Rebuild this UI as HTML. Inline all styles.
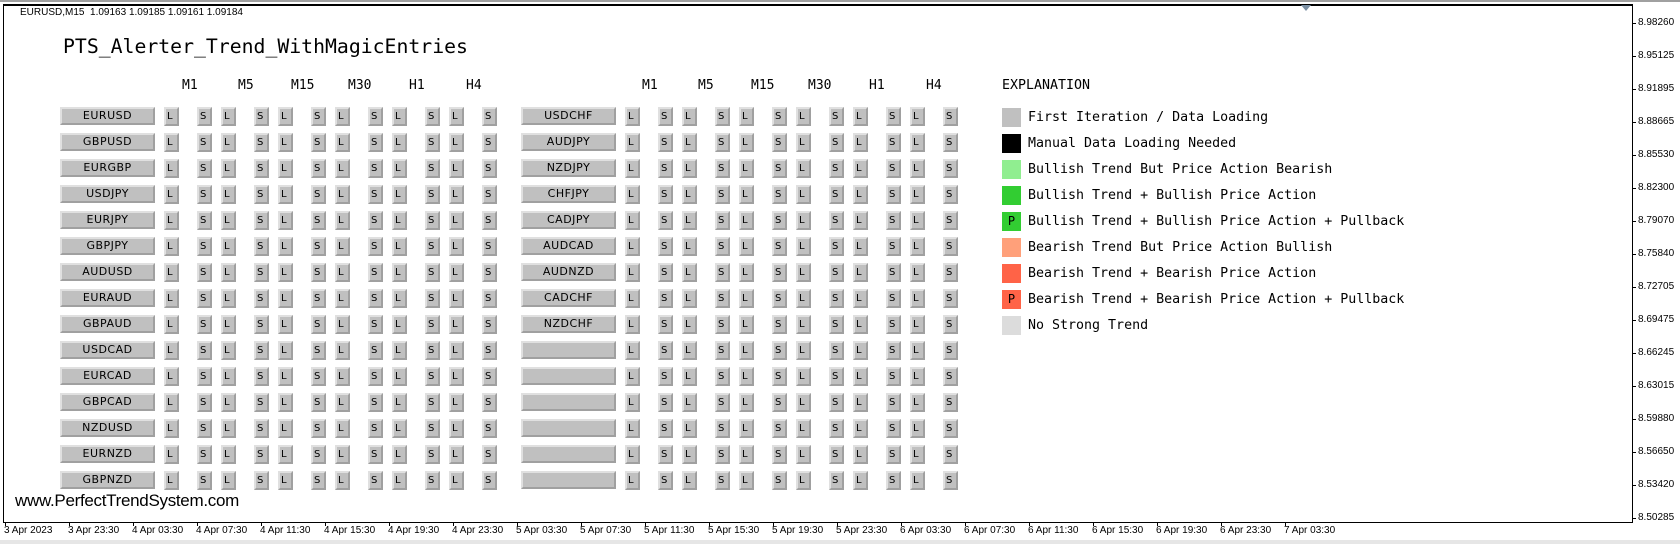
<!DOCTYPE html>
<html><head><meta charset="utf-8"><style>
*{margin:0;padding:0;box-sizing:border-box}
body{width:1680px;height:544px;background:#fff;position:relative;overflow:hidden;font-family:"Liberation Sans",sans-serif}
.topband{position:absolute;left:0;top:0;width:1680px;height:2px;background:#a0a0a0}
.frame{position:absolute;left:3px;top:4px;width:1630px;height:519px;border:1px solid #000;border-top:2px solid #000}
.botband{position:absolute;left:0;top:540px;width:1680px;height:4px;background:#e6e6e6}
.sym{position:absolute;left:20px;top:7px;font-size:10px;color:#000;white-space:pre}
.title{position:absolute;left:63px;top:35px;font:19.8px "DejaVu Sans Mono",monospace;color:#000}
.hd{position:absolute;top:78px;font:13px "DejaVu Sans Mono",monospace;color:#000}
.r{position:absolute;display:flex;height:19px}
.r b{width:95px;height:18px;background:#c0c0c0;border:2px solid;border-color:#e0e0e0 #a0a0a0 #a0a0a0 #e0e0e0;font:normal 11px "DejaVu Sans",sans-serif;letter-spacing:0.5px;text-align:center;line-height:14px;color:#000}
.r i{font-style:normal;width:15px;height:19px;background:#c0c0c0;border:2px solid;border-color:#e0e0e0 #a0a0a0 #a0a0a0 #e0e0e0;font:10px "DejaVu Sans",sans-serif;line-height:15px;padding-left:1px;color:#000;margin-left:9px}
.r i:nth-of-type(even){margin-left:18px}
.ex{position:absolute;left:1002px;font:13.3px "DejaVu Sans Mono",monospace;color:#000}
.sq{position:absolute;left:1002px;width:19px;height:19px;font:12px "DejaVu Sans Mono",monospace;text-align:center;line-height:19px}
.et{position:absolute;left:1028px;font:13.3px "DejaVu Sans Mono",monospace;line-height:19px;white-space:pre}
.ya{position:absolute;left:1638px;font-size:10px;color:#000}
.yt{position:absolute;left:1632px;width:4px;height:1px;background:#000}
.xa{position:absolute;top:525px;font-size:10px;color:#000;white-space:nowrap}
.xt{position:absolute;top:522px;width:1px;height:4px;background:#000}
.www{position:absolute;left:15px;top:491px;font-size:17px;color:#000;letter-spacing:-0.3px}
.tri{position:absolute;left:1301px;top:5px;width:0;height:0;border-left:5px solid transparent;border-right:5px solid transparent;border-top:6px solid #7a8fa3}
</style></head><body>
<div class="topband"></div>
<div class="frame"></div>
<div class="botband"></div>
<div class="tri"></div>
<div class="sym">EURUSD,M15  1.09163 1.09185 1.09161 1.09184</div>
<div class="title">PTS_Alerter_Trend_WithMagicEntries</div>

<div class="hd" style="left:182px">M1</div><div class="hd" style="left:238px">M5</div><div class="hd" style="left:291px">M15</div><div class="hd" style="left:348px">M30</div><div class="hd" style="left:409px">H1</div><div class="hd" style="left:466px">H4</div>
<div class="hd" style="left:642px">M1</div><div class="hd" style="left:698px">M5</div><div class="hd" style="left:751px">M15</div><div class="hd" style="left:808px">M30</div><div class="hd" style="left:869px">H1</div><div class="hd" style="left:926px">H4</div>

<div class="r" style="left:60px;top:107px"><b>EURUSD</b><i>L</i><i>S</i><i>L</i><i>S</i><i>L</i><i>S</i><i>L</i><i>S</i><i>L</i><i>S</i><i>L</i><i>S</i></div>
<div class="r" style="left:60px;top:133px"><b>GBPUSD</b><i>L</i><i>S</i><i>L</i><i>S</i><i>L</i><i>S</i><i>L</i><i>S</i><i>L</i><i>S</i><i>L</i><i>S</i></div>
<div class="r" style="left:60px;top:159px"><b>EURGBP</b><i>L</i><i>S</i><i>L</i><i>S</i><i>L</i><i>S</i><i>L</i><i>S</i><i>L</i><i>S</i><i>L</i><i>S</i></div>
<div class="r" style="left:60px;top:185px"><b>USDJPY</b><i>L</i><i>S</i><i>L</i><i>S</i><i>L</i><i>S</i><i>L</i><i>S</i><i>L</i><i>S</i><i>L</i><i>S</i></div>
<div class="r" style="left:60px;top:211px"><b>EURJPY</b><i>L</i><i>S</i><i>L</i><i>S</i><i>L</i><i>S</i><i>L</i><i>S</i><i>L</i><i>S</i><i>L</i><i>S</i></div>
<div class="r" style="left:60px;top:237px"><b>GBPJPY</b><i>L</i><i>S</i><i>L</i><i>S</i><i>L</i><i>S</i><i>L</i><i>S</i><i>L</i><i>S</i><i>L</i><i>S</i></div>
<div class="r" style="left:60px;top:263px"><b>AUDUSD</b><i>L</i><i>S</i><i>L</i><i>S</i><i>L</i><i>S</i><i>L</i><i>S</i><i>L</i><i>S</i><i>L</i><i>S</i></div>
<div class="r" style="left:60px;top:289px"><b>EURAUD</b><i>L</i><i>S</i><i>L</i><i>S</i><i>L</i><i>S</i><i>L</i><i>S</i><i>L</i><i>S</i><i>L</i><i>S</i></div>
<div class="r" style="left:60px;top:315px"><b>GBPAUD</b><i>L</i><i>S</i><i>L</i><i>S</i><i>L</i><i>S</i><i>L</i><i>S</i><i>L</i><i>S</i><i>L</i><i>S</i></div>
<div class="r" style="left:60px;top:341px"><b>USDCAD</b><i>L</i><i>S</i><i>L</i><i>S</i><i>L</i><i>S</i><i>L</i><i>S</i><i>L</i><i>S</i><i>L</i><i>S</i></div>
<div class="r" style="left:60px;top:367px"><b>EURCAD</b><i>L</i><i>S</i><i>L</i><i>S</i><i>L</i><i>S</i><i>L</i><i>S</i><i>L</i><i>S</i><i>L</i><i>S</i></div>
<div class="r" style="left:60px;top:393px"><b>GBPCAD</b><i>L</i><i>S</i><i>L</i><i>S</i><i>L</i><i>S</i><i>L</i><i>S</i><i>L</i><i>S</i><i>L</i><i>S</i></div>
<div class="r" style="left:60px;top:419px"><b>NZDUSD</b><i>L</i><i>S</i><i>L</i><i>S</i><i>L</i><i>S</i><i>L</i><i>S</i><i>L</i><i>S</i><i>L</i><i>S</i></div>
<div class="r" style="left:60px;top:445px"><b>EURNZD</b><i>L</i><i>S</i><i>L</i><i>S</i><i>L</i><i>S</i><i>L</i><i>S</i><i>L</i><i>S</i><i>L</i><i>S</i></div>
<div class="r" style="left:60px;top:471px"><b>GBPNZD</b><i>L</i><i>S</i><i>L</i><i>S</i><i>L</i><i>S</i><i>L</i><i>S</i><i>L</i><i>S</i><i>L</i><i>S</i></div>

<div class="r" style="left:521px;top:107px"><b>USDCHF</b><i>L</i><i>S</i><i>L</i><i>S</i><i>L</i><i>S</i><i>L</i><i>S</i><i>L</i><i>S</i><i>L</i><i>S</i></div>
<div class="r" style="left:521px;top:133px"><b>AUDJPY</b><i>L</i><i>S</i><i>L</i><i>S</i><i>L</i><i>S</i><i>L</i><i>S</i><i>L</i><i>S</i><i>L</i><i>S</i></div>
<div class="r" style="left:521px;top:159px"><b>NZDJPY</b><i>L</i><i>S</i><i>L</i><i>S</i><i>L</i><i>S</i><i>L</i><i>S</i><i>L</i><i>S</i><i>L</i><i>S</i></div>
<div class="r" style="left:521px;top:185px"><b>CHFJPY</b><i>L</i><i>S</i><i>L</i><i>S</i><i>L</i><i>S</i><i>L</i><i>S</i><i>L</i><i>S</i><i>L</i><i>S</i></div>
<div class="r" style="left:521px;top:211px"><b>CADJPY</b><i>L</i><i>S</i><i>L</i><i>S</i><i>L</i><i>S</i><i>L</i><i>S</i><i>L</i><i>S</i><i>L</i><i>S</i></div>
<div class="r" style="left:521px;top:237px"><b>AUDCAD</b><i>L</i><i>S</i><i>L</i><i>S</i><i>L</i><i>S</i><i>L</i><i>S</i><i>L</i><i>S</i><i>L</i><i>S</i></div>
<div class="r" style="left:521px;top:263px"><b>AUDNZD</b><i>L</i><i>S</i><i>L</i><i>S</i><i>L</i><i>S</i><i>L</i><i>S</i><i>L</i><i>S</i><i>L</i><i>S</i></div>
<div class="r" style="left:521px;top:289px"><b>CADCHF</b><i>L</i><i>S</i><i>L</i><i>S</i><i>L</i><i>S</i><i>L</i><i>S</i><i>L</i><i>S</i><i>L</i><i>S</i></div>
<div class="r" style="left:521px;top:315px"><b>NZDCHF</b><i>L</i><i>S</i><i>L</i><i>S</i><i>L</i><i>S</i><i>L</i><i>S</i><i>L</i><i>S</i><i>L</i><i>S</i></div>
<div class="r" style="left:521px;top:341px"><b></b><i>L</i><i>S</i><i>L</i><i>S</i><i>L</i><i>S</i><i>L</i><i>S</i><i>L</i><i>S</i><i>L</i><i>S</i></div>
<div class="r" style="left:521px;top:367px"><b></b><i>L</i><i>S</i><i>L</i><i>S</i><i>L</i><i>S</i><i>L</i><i>S</i><i>L</i><i>S</i><i>L</i><i>S</i></div>
<div class="r" style="left:521px;top:393px"><b></b><i>L</i><i>S</i><i>L</i><i>S</i><i>L</i><i>S</i><i>L</i><i>S</i><i>L</i><i>S</i><i>L</i><i>S</i></div>
<div class="r" style="left:521px;top:419px"><b></b><i>L</i><i>S</i><i>L</i><i>S</i><i>L</i><i>S</i><i>L</i><i>S</i><i>L</i><i>S</i><i>L</i><i>S</i></div>
<div class="r" style="left:521px;top:445px"><b></b><i>L</i><i>S</i><i>L</i><i>S</i><i>L</i><i>S</i><i>L</i><i>S</i><i>L</i><i>S</i><i>L</i><i>S</i></div>
<div class="r" style="left:521px;top:471px"><b></b><i>L</i><i>S</i><i>L</i><i>S</i><i>L</i><i>S</i><i>L</i><i>S</i><i>L</i><i>S</i><i>L</i><i>S</i></div>

<div class="ex" style="top:78px">EXPLANATION</div>
<div class="sq" style="top:108px;background:#c0c0c0"></div><div class="et" style="top:108px">First Iteration / Data Loading</div>
<div class="sq" style="top:134px;background:#000"></div><div class="et" style="top:134px">Manual Data Loading Needed</div>
<div class="sq" style="top:160px;background:#90ee90"></div><div class="et" style="top:160px">Bullish Trend But Price Action Bearish</div>
<div class="sq" style="top:186px;background:#32cd32"></div><div class="et" style="top:186px">Bullish Trend + Bullish Price Action</div>
<div class="sq" style="top:212px;background:#32cd32">P</div><div class="et" style="top:212px">Bullish Trend + Bullish Price Action + Pullback</div>
<div class="sq" style="top:238px;background:#ffa07a"></div><div class="et" style="top:238px">Bearish Trend But Price Action Bullish</div>
<div class="sq" style="top:264px;background:#ff6347"></div><div class="et" style="top:264px">Bearish Trend + Bearish Price Action</div>
<div class="sq" style="top:290px;background:#ff6347">P</div><div class="et" style="top:290px">Bearish Trend + Bearish Price Action + Pullback</div>
<div class="sq" style="top:316px;background:#dcdcdc"></div><div class="et" style="top:316px">No Strong Trend</div>

<div class="www">www.PerfectTrendSystem.com</div>

<div class="yt" style="top:23px"></div><div class="ya" style="top:17px">8.98260</div>
<div class="yt" style="top:56px"></div><div class="ya" style="top:50px">8.95125</div>
<div class="yt" style="top:89px"></div><div class="ya" style="top:83px">8.91895</div>
<div class="yt" style="top:122px"></div><div class="ya" style="top:116px">8.88665</div>
<div class="yt" style="top:155px"></div><div class="ya" style="top:149px">8.85530</div>
<div class="yt" style="top:188px"></div><div class="ya" style="top:182px">8.82300</div>
<div class="yt" style="top:221px"></div><div class="ya" style="top:215px">8.79070</div>
<div class="yt" style="top:254px"></div><div class="ya" style="top:248px">8.75840</div>
<div class="yt" style="top:287px"></div><div class="ya" style="top:281px">8.72705</div>
<div class="yt" style="top:320px"></div><div class="ya" style="top:314px">8.69475</div>
<div class="yt" style="top:353px"></div><div class="ya" style="top:347px">8.66245</div>
<div class="yt" style="top:386px"></div><div class="ya" style="top:380px">8.63015</div>
<div class="yt" style="top:419px"></div><div class="ya" style="top:413px">8.59880</div>
<div class="yt" style="top:452px"></div><div class="ya" style="top:446px">8.56650</div>
<div class="yt" style="top:485px"></div><div class="ya" style="top:479px">8.53420</div>
<div class="yt" style="top:518px"></div><div class="ya" style="top:512px">8.50285</div>

<div class="xt" style="left:5px"></div><div class="xa" style="left:4px">3 Apr 2023</div>
<div class="xt" style="left:69px"></div><div class="xa" style="left:68px">3 Apr 23:30</div>
<div class="xt" style="left:133px"></div><div class="xa" style="left:132px">4 Apr 03:30</div>
<div class="xt" style="left:197px"></div><div class="xa" style="left:196px">4 Apr 07:30</div>
<div class="xt" style="left:261px"></div><div class="xa" style="left:260px">4 Apr 11:30</div>
<div class="xt" style="left:325px"></div><div class="xa" style="left:324px">4 Apr 15:30</div>
<div class="xt" style="left:389px"></div><div class="xa" style="left:388px">4 Apr 19:30</div>
<div class="xt" style="left:453px"></div><div class="xa" style="left:452px">4 Apr 23:30</div>
<div class="xt" style="left:517px"></div><div class="xa" style="left:516px">5 Apr 03:30</div>
<div class="xt" style="left:581px"></div><div class="xa" style="left:580px">5 Apr 07:30</div>
<div class="xt" style="left:645px"></div><div class="xa" style="left:644px">5 Apr 11:30</div>
<div class="xt" style="left:709px"></div><div class="xa" style="left:708px">5 Apr 15:30</div>
<div class="xt" style="left:773px"></div><div class="xa" style="left:772px">5 Apr 19:30</div>
<div class="xt" style="left:837px"></div><div class="xa" style="left:836px">5 Apr 23:30</div>
<div class="xt" style="left:901px"></div><div class="xa" style="left:900px">6 Apr 03:30</div>
<div class="xt" style="left:965px"></div><div class="xa" style="left:964px">6 Apr 07:30</div>
<div class="xt" style="left:1029px"></div><div class="xa" style="left:1028px">6 Apr 11:30</div>
<div class="xt" style="left:1093px"></div><div class="xa" style="left:1092px">6 Apr 15:30</div>
<div class="xt" style="left:1157px"></div><div class="xa" style="left:1156px">6 Apr 19:30</div>
<div class="xt" style="left:1221px"></div><div class="xa" style="left:1220px">6 Apr 23:30</div>
<div class="xt" style="left:1285px"></div><div class="xa" style="left:1284px">7 Apr 03:30</div>
</body></html>
